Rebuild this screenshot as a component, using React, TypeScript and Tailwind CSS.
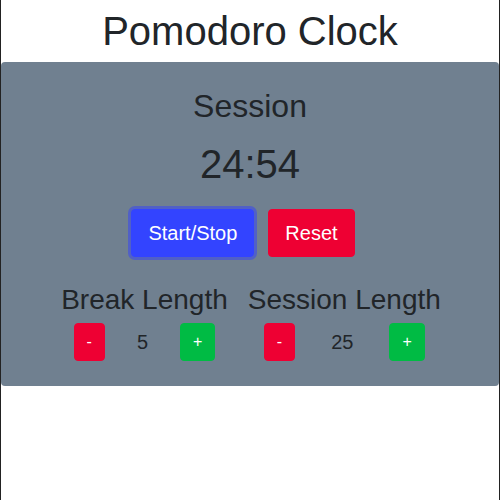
import React from "react";

function Counter({ label, value, gap }: { label: string; value: number; gap: string }) {
  return (
    <div className="flex flex-col items-center">
      <div className="text-[28px] leading-[34px] text-[#212529]">{label}</div>
      <div className={`mt-[6px] flex items-center justify-center ${gap}`}>
        <button className="h-[38px] rounded-[4px] border border-[#ee0033] bg-[#ee0033] px-[12px] text-[16px] leading-[24px] text-white">
          -
        </button>
        <span className="text-[20px] leading-[30px] text-[#212529]">{value}</span>
        <button className="h-[38px] rounded-[4px] border border-[#00bb44] bg-[#00bb44] px-[12px] text-[16px] leading-[24px] text-white">
          +
        </button>
      </div>
    </div>
  );
}

export default function App() {
  return (
    <div
      className="h-[500px] w-[500px] border-x border-[#222222] bg-white"
      style={{ fontFamily: '"Liberation Sans", Arial, sans-serif' }}
    >
      <h1 className="pt-[7px] text-center text-[40px] leading-[48px] text-[#212529]">Pomodoro Clock</h1>
      <div className="mt-[7px] flex flex-col items-center rounded-[4px] bg-[#708090] pb-[25px] pt-[25px]">
        <div className="text-[32px] leading-[38px] text-[#212529]">Session</div>
        <div className="mt-[15px] text-[40px] leading-[48px] text-[#212529]">24:54</div>
        <div className="mt-[21px] flex items-center">
          <button className="mr-[14px] h-[48px] rounded-[4px] border border-[#3344ff] bg-[#3344ff] px-[16px] text-[20px] leading-[30px] text-white shadow-[0_0_0_3px_rgba(60,75,235,0.6)]">
            Start/Stop
          </button>
          <button className="mr-[14px] h-[48px] rounded-[4px] border border-[#ee0033] bg-[#ee0033] px-[16px] text-[20px] leading-[30px] text-white">
            Reset
          </button>
        </div>
        <div className="mt-[26px] flex items-start gap-[20px] pl-[2px]">
          <Counter label="Break Length" value={5} gap="gap-[32px]" />
          <Counter label="Session Length" value={25} gap="gap-[36px]" />
        </div>
      </div>
    </div>
  );
}
